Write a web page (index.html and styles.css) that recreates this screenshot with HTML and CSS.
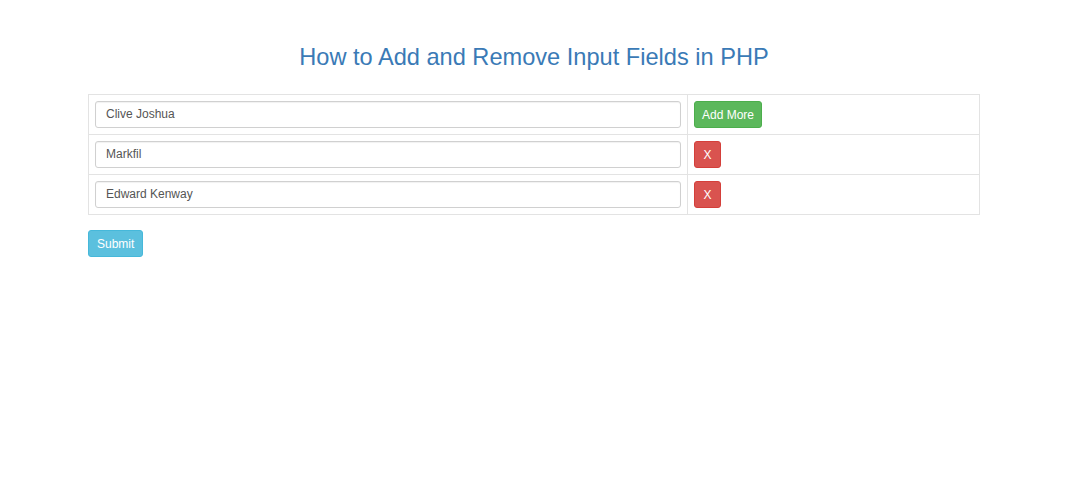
FILE: index.html
```html
<!DOCTYPE html>
<html lang="en">
<head>
    <meta charset="UTF-8">
    <meta name="viewport" content="width=device-width, initial-scale=1.0">
    <title>Add and Remove Input Fields</title>
    <link rel="stylesheet" href="styles.css">
</head>
<body>
    <div class="container">
        <h2 class="title">How to Add and Remove Input Fields in PHP</h2>

        <form name="add_name" id="add_name">
            <table class="fields" id="dynamic_field">
                <tr>
                    <td class="name-cell"><input type="text" name="name[]" class="form-control" value="Clive Joshua"></td>
                    <td><button type="button" class="btn btn-success">Add More</button></td>
                </tr>
                <tr>
                    <td class="name-cell"><input type="text" name="name[]" class="form-control" value="Markfil"></td>
                    <td><button type="button" class="btn btn-danger">X</button></td>
                </tr>
                <tr>
                    <td class="name-cell"><input type="text" name="name[]" class="form-control" value="Edward Kenway"></td>
                    <td><button type="button" class="btn btn-danger">X</button></td>
                </tr>
            </table>
            <button type="button" class="btn btn-info">Submit</button>
        </form>
    </div>
</body>
</html>
```

FILE: styles.css
```css
/* General Styles */
body {
    font-family: "Liberation Sans", Arial, sans-serif;
    background-color: #fff;
    color: #333;
    margin: 0;
    padding: 0;
}

.container {
    width: 892px;
    margin: 0 auto;
    padding-top: 45px;
}

.title {
    font-size: 23.6px;
    font-weight: normal;
    color: #3a7ab6;
    text-align: center;
    margin: 0 0 23px;
    line-height: 1.1;
}

/* Table */
.fields {
    width: 100%;
    border-collapse: collapse;
    margin-bottom: 15px;
}

.fields td {
    border: 1px solid #e3e3e3;
    padding: 6px;
    vertical-align: middle;
}

.fields td.name-cell {
    width: 586px;
}

.form-control {
    display: block;
    box-sizing: border-box;
    width: 100%;
    height: 27px;
    padding: 4px 10px;
    font-family: inherit;
    font-size: 12px;
    color: #555;
    border: 1px solid #d0d0d0;
    border-radius: 3px;
    box-shadow: inset 0 1px 1px rgba(0, 0, 0, 0.06);
}

/* Buttons */
.btn {
    display: inline-block;
    height: 27px;
    padding: 1px 7px 0;
    font-family: inherit;
    font-size: 12px;
    color: #fff;
    border: 1px solid transparent;
    border-radius: 3px;
    cursor: pointer;
    vertical-align: middle;
}

.btn-success {
    background-color: #5cb85c;
    border-color: #4cae4c;
}

.btn-danger {
    padding: 1px 8.5px 0;
    background-color: #d9534f;
    border-color: #d43f3a;
}

.btn-info {
    padding: 1px 8px 0;
    background-color: #5bc0de;
    border-color: #46b8da;
}
```
